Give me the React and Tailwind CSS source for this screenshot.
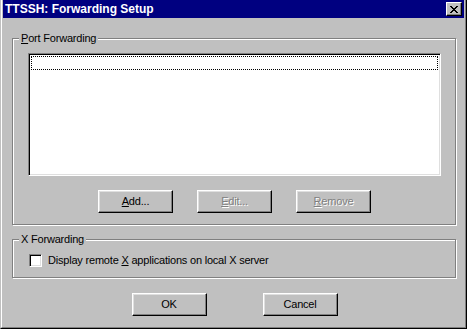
import React from "react";

const font = { fontFamily: '"Liberation Sans", Arial, sans-serif' };

// classic raised push button
const Button = ({ children, disabled }) => (
  <button
    type="button"
    className={
      "w-[75px] h-[23px] bg-[#c0c0c0] border border-t-white border-l-white border-r-black border-b-black " +
      "shadow-[inset_-1px_-1px_0_#808080,inset_1px_1px_0_#dfdfdf] text-[11px] tracking-[-0.2px] leading-none flex items-center justify-center " +
      (disabled ? "text-[#808080] [text-shadow:1px_1px_0_#fff]" : "text-black")
    }
  >
    {children}
  </button>
);

const GroupBox = ({ label, className, children }) => (
  <div
    className={
      "relative border border-[#808080] shadow-[inset_1px_1px_0_#fff,1px_1px_0_#fff] " + className
    }
  >
    <span className="absolute -top-[7px] left-[6px] px-[2px] bg-[#c0c0c0] text-[11px] tracking-[-0.2px] leading-[13px] text-black">
      {label}
    </span>
    {children}
  </div>
);

export default function App() {
  return (
    <div className="w-[470px] h-[329px] bg-white" style={font}>
      <div className="w-[467px] h-[329px] bg-[#c0c0c0] border-l border-l-[#c0c0c0] border-r border-r-black border-b border-b-black">
        <div className="h-full border-l border-l-white border-r border-r-[#808080] border-b border-b-[#808080] px-px flex flex-col">
          {/* title bar */}
          <div className="h-[18px] bg-[#000080] flex items-center justify-between pl-[2px] pr-[2px]">
            <span className="text-white text-[12px] font-bold leading-none">TTSSH: Forwarding Setup</span>
            <div className="w-[16px] h-[14px] bg-[#c0c0c0] border border-t-white border-l-white border-r-black border-b-black shadow-[inset_-1px_-1px_0_#808080] flex items-center justify-center">
              <svg width="8" height="7" viewBox="0 0 8 7" shapeRendering="crispEdges">
                <path d="M0 0h2v1h-2zM6 0h2v1h-2zM1 1h2v1h-2zM5 1h2v1h-2zM2 2h4v1h-4zM3 3h2v1h-2zM2 4h4v1h-4zM1 5h2v1h-2zM5 5h2v1h-2zM0 6h2v1h-2zM6 6h2v1h-2z" fill="#000" />
              </svg>
            </div>
          </div>

          <div className="flex flex-col pl-[9px] pr-[8px]">
            <GroupBox label={<><u>P</u>ort Forwarding</>} className="mt-[20px] h-[187px] flex flex-col items-center">
              <div className="mt-[14px] w-[413px] h-[123px] bg-white border border-t-[#808080] border-l-[#808080] border-r-white border-b-white shadow-[inset_1px_1px_0_#000,inset_-1px_-1px_0_#dfdfdf] p-[2px]">
                <div className="h-[14px] border border-dotted border-black"></div>
              </div>
              <div className="mt-[14px] flex gap-[24px] ml-[1px]">
                <Button><span><u>A</u>dd...</span></Button>
                <Button disabled><span><u>E</u>dit...</span></Button>
                <Button disabled><span><u>R</u>emove</span></Button>
              </div>
            </GroupBox>

            <GroupBox label="X Forwarding" className="mt-[14px] h-[39px] flex items-center">
              <div className="ml-[16px] mt-[3px] flex items-center gap-[6px]">
                <div className="w-[13px] h-[13px] bg-white border border-t-[#808080] border-l-[#808080] border-r-white border-b-white shadow-[inset_1px_1px_0_#000,inset_-1px_-1px_0_#dfdfdf]"></div>
                <span className="text-[11px] tracking-[-0.2px] leading-none text-black">
                  Display remote <u>X</u> applications on local X server
                </span>
              </div>
            </GroupBox>

            <div className="mt-[15px] flex justify-center gap-[56px] ml-[1px]">
              <Button>OK</Button>
              <Button>Cancel</Button>
            </div>
          </div>
        </div>
      </div>
    </div>
  );
}
